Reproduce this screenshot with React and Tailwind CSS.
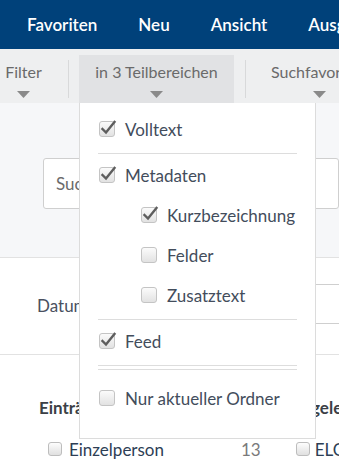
import React from "react";

const font = { fontFamily: "Lato, 'Open Sans', sans-serif" };

function Check({ checked }) {
  return (
    <span className="relative inline-block w-[16px] h-[16px] shrink-0 rounded-[3px] border border-[#c4c4c4] bg-gradient-to-b from-[#fbfbfb] to-[#e2e2e2]">
      {checked && (
        <svg className="absolute left-[0px] top-[-3px]" width="17" height="17" viewBox="0 0 17 17">
          <path d="M2.5 10 L6 13.5 L14.5 3" fill="none" stroke="#5e5e5e" strokeWidth="2.4" strokeLinecap="square" />
        </svg>
      )}
    </span>
  );
}

function Item({ label, checked, indent }) {
  return (
    <div className={`flex items-center h-[40px] gap-[10px] ${indent ? "pl-[61px]" : "pl-[19px]"}`}>
      <Check checked={checked} />
      <span className="text-[17px] text-[#434d5c] leading-none">{label}</span>
    </div>
  );
}

function Tri() {
  return (
    <svg width="13" height="7" viewBox="0 0 13 7" className="mt-[9px]">
      <path d="M0 0 H13 L6.5 7 Z" fill="#8a8a8a" />
    </svg>
  );
}

export default function App() {
  return (
    <div className="relative w-[339px] h-[460px] overflow-hidden bg-white" style={font}>
      <div className="h-[49px] bg-[#00417a] flex items-center pl-[27px] gap-[41px] text-white text-[17px] font-semibold whitespace-nowrap">
        <span className="shrink-0">Favoriten</span>
        <span className="shrink-0">Neu</span>
        <span className="shrink-0">Ansicht</span>
        <span className="shrink-0">Ausgabe</span>
      </div>
      <div className="h-[54px] bg-[#eeeff0] flex items-end text-[16px] text-[#6a6a6a] whitespace-nowrap">
        <div className="shrink-0 w-[47px] h-[48px] flex flex-col items-center pt-[7px]">
          <span className="leading-[20px]">Filter</span>
          <Tri />
        </div>
        <div className="shrink-0 w-[22px] h-[48px] flex items-start">
          <div className="ml-[21px] mt-[5px] w-px h-[38px] bg-[#d8d9da]" />
        </div>
        <div className="shrink-0 w-[155px] ml-[10px] h-[48px] bg-[#e1e2e4] flex flex-col items-center pt-[7px]">
          <span className="leading-[20px]">in 3 Teilbereichen</span>
          <Tri />
        </div>
        <div className="shrink-0 w-[37px] h-[48px] flex items-start">
          <div className="ml-[11px] mt-[5px] w-px h-[38px] bg-[#d8d9da]" />
        </div>
        <div className="shrink-0 h-[48px] flex flex-col items-center pt-[7px]">
          <span className="leading-[20px]">Suchfavoriten</span>
          <Tri />
        </div>
      </div>
      <div className="h-[155px] bg-[#f6f7f9] border-b border-[#e2e2e2] pt-[55px] pl-[43px]">
        <div className="h-[51px] bg-white border border-[#cfcfcf] rounded-[3px] flex items-center pl-[12px] text-[17px] text-[#6b6b6b]">
          Suchbegriff
        </div>
      </div>
      <div className="h-[97px] border-b border-[#e2e2e2] flex items-center relative">
        <span className="ml-[37px] text-[17px] text-[#4a5160]">Datum</span>
        <div className="absolute left-[250px] right-[-10px] top-[26px] h-[40px] border-y border-[#cfcfcf]" />
      </div>
      <div className="flex text-[17px] font-bold text-[#3b3f46] pt-[40px] whitespace-nowrap">
        <span className="shrink-0 ml-[39px]">Einträge</span>
        <span className="shrink-0 ml-[188px]">Angelegt</span>
      </div>
      <div className="flex items-center mt-[16px] text-[17px] whitespace-nowrap">
        <span className="shrink-0 ml-[48px] w-[14px] h-[14px] rounded-[3px] border border-[#bdbdbd] bg-gradient-to-b from-[#fdfdfd] to-[#e0e0e0]" />
        <span className="shrink-0 ml-[7px] text-[#2d3e55]">Einzelperson</span>
        <span className="shrink-0 ml-[77px] text-[#7a7a7a]">13</span>
        <span className="shrink-0 ml-[35px] w-[14px] h-[14px] rounded-[3px] border border-[#bdbdbd] bg-gradient-to-b from-[#fdfdfd] to-[#e0e0e0]" />
        <span className="shrink-0 ml-[5px] text-[#2d3e55]">ELO</span>
      </div>

      <div className="absolute left-[79px] top-[103px] w-[237px] h-[336px] bg-white border border-[#dcdcdc] border-t-0 pt-[6px]">
        <Item label="Volltext" checked />
        <div className="mx-[18px] mt-[4px] mb-[1px] h-px bg-[#dddddd]" />
        <Item label="Metadaten" checked />
        <Item label="Kurzbezeichnung" checked indent />
        <Item label="Felder" indent />
        <Item label="Zusatztext" indent />
        <div className="mx-[18px] mt-[4px] mb-[1px] h-px bg-[#dddddd]" />
        <Item label="Feed" checked />
        <div className="mx-[18px] mt-[4px] h-px bg-[#dddddd]" />
        <div className="mx-[18px] mt-[3px] mb-[8px] h-px bg-[#dddddd]" />
        <Item label="Nur aktueller Ordner" />
      </div>
    </div>
  );
}
